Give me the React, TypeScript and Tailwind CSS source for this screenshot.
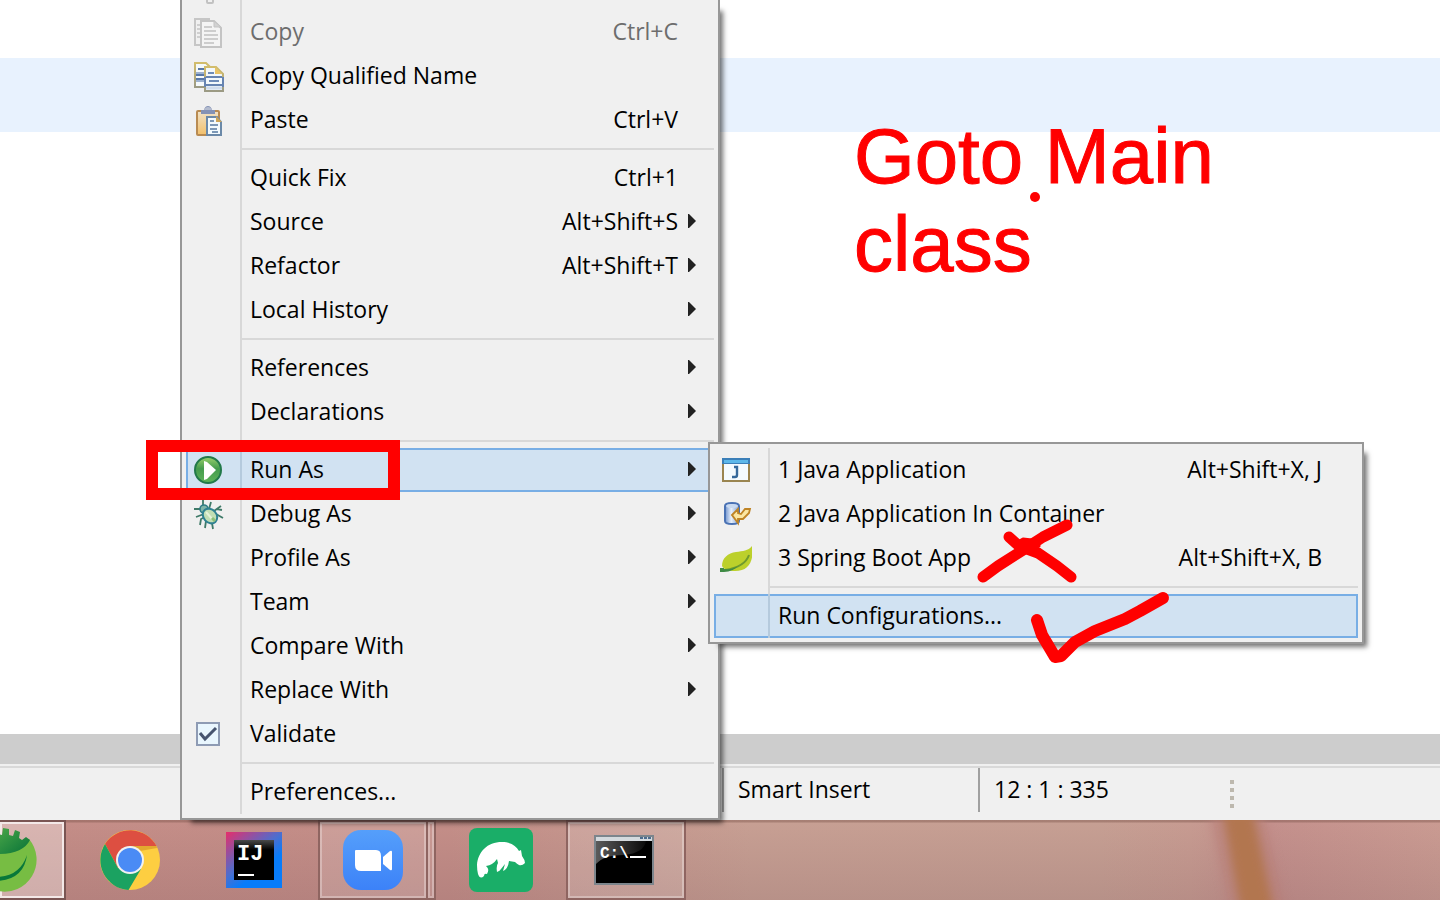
import React, { useState } from "react";

type Item = {
  label: string;
  keys?: string;
  icon?: React.ReactNode;
  arrow?: boolean;
  disabled?: boolean;
  active?: boolean;
};

function CutIcon() {
  return (
    <svg viewBox="0 0 32 10" className="h-2.5 w-8" aria-hidden="true">
      <path d="M15 0v2q0 1 1 1h4q1 0 1-1V0" fill="none" stroke="#c2c2c2" strokeWidth="2" />
    </svg>
  );
}

function CopyIcon() {
  return (
    <svg viewBox="0 0 32 32" className="size-8" aria-hidden="true">
      <path d="M18 3H3v26h5" fill="none" stroke="#c6c6c6" strokeWidth="2" />
      <path d="M5 9h3M5 13h3M5 17h3M5 21h3" stroke="#cfcfcf" strokeWidth="2" />
      <path d="M9 5h13l7 7v19H9z" fill="#f4f4f4" stroke="#c4c4c4" strokeWidth="2" />
      <path d="M22 5v6h7z" fill="#d2d2d2" stroke="#c4c4c4" />
      <path d="M12 11h8M12 15h12M12 19h14M12 23h14M12 27h10" stroke="#cdcdcd" strokeWidth="2" />
    </svg>
  );
}

function CopyNameIcon() {
  return (
    <svg viewBox="0 0 32 32" className="size-8" aria-hidden="true">
      <defs>
        <linearGradient id="nameEdge" x1="0" y1="0" x2="0" y2="1">
          <stop offset="0" stopColor="#d2bd6c" />
          <stop offset="1" stopColor="#9b9a84" />
        </linearGradient>
      </defs>
      <path d="M3 3h11l5 5v19H3z" fill="#f5fafc" stroke="url(#nameEdge)" strokeWidth="2" />
      <path d="M4 13h8M4 21h8" stroke="#9db2d1" strokeWidth="2" />
      <path d="M6 9h6M4 15h8M4 19h8" stroke="#5878a8" strokeWidth="2" />
      <path d="M13 7h11l7 7v17H13z" fill="#f2f8fb" stroke="url(#nameEdge)" strokeWidth="2" />
      <path d="M23 7v7h7z" fill="#e8c365" />
      <path d="M13 17v10M31 17v10" stroke="#6684b2" strokeWidth="2" />
      <path d="M14 17h16M14 25h16" stroke="#6684b2" strokeWidth="2" />
      <path d="M14 28h16" stroke="#cfdced" strokeWidth="3" />
      <path d="M16 13h6M17 21h10" stroke="#6d8bb8" strokeWidth="2" />
    </svg>
  );
}

function PasteIcon() {
  return (
    <svg viewBox="0 0 32 32" className="size-8" aria-hidden="true">
      <defs>
        <linearGradient id="board" x1="0" y1="0" x2="0" y2="1">
          <stop offset="0" stopColor="#f0e2c8" />
          <stop offset="1" stopColor="#f3c06a" />
        </linearGradient>
      </defs>
      <rect x="5" y="7" width="22" height="24" rx="1" fill="url(#board)" stroke="#b98b52" strokeWidth="2" />
      <path d="M9 10V6h3q1-4 4-4t4 4h3v4z" fill="#8492b5" />
      <path d="M12 6q1-3 4-3t4 3z" fill="#b4bccf" />
      <path d="M15 13h10l4 5v13H15z" fill="#f3fafd" stroke="#6b89a8" strokeWidth="2" />
      <path d="M24 12v6h6z" fill="#cda559" />
      <path d="M18 17h4M18 21h8M18 25h7M20 28h6" stroke="#7c98b7" strokeWidth="2" />
    </svg>
  );
}

function RunIcon() {
  return (
    <svg viewBox="0 0 32 32" className="size-8" aria-hidden="true">
      <defs>
        <linearGradient id="run" x1="0" y1="0" x2="0" y2="1">
          <stop offset="0" stopColor="#9ad16d" />
          <stop offset="0.45" stopColor="#449b4d" />
          <stop offset="1" stopColor="#5fb45a" />
        </linearGradient>
      </defs>
      <circle cx="16" cy="16" r="13" fill="url(#run)" stroke="#22794a" strokeWidth="2" />
      <path d="M12 7v19l3-1 9-9-9-8z" fill="#fff" />
    </svg>
  );
}

function BugIcon() {
  return (
    <svg viewBox="0 0 32 32" className="size-8" aria-hidden="true">
      <g fill="none" stroke="#3f7a68" strokeWidth="1.8">
        <path d="M11 2v6M2 11h8M19 4l-2 7M29 8l-7 5M31 20l-7-4M4 19l8-3M8 27l1-6 4-2M13 30l1-7M21 31l-1-6M25 11l5 1" />
      </g>
      <circle cx="12" cy="11" r="4" fill="#7fb5a8" stroke="#2f7c86" strokeWidth="1.6" />
      <ellipse cx="18" cy="18" rx="8" ry="6.5" transform="rotate(48 18 18)" fill="#c1deb4" stroke="#2f8192" strokeWidth="2" />
      <path d="M14 14l7 8" stroke="#e4f2d8" strokeWidth="2" />
      <path d="M20 20l3 3" stroke="#8cbf78" strokeWidth="3" />
    </svg>
  );
}

function JavaAppIcon() {
  return (
    <svg viewBox="0 0 32 32" className="size-8" aria-hidden="true">
      <rect x="3" y="5" width="26" height="22" fill="#f4fbff" stroke="#9a8550" strokeWidth="2" />
      <path d="M2 4h28v6H2z" fill="#3b7fb8" />
      <path d="M4 6h24v3H4z" fill="#5cb8ea" />
      <path d="M14 13h3v8q0 2-2 2h-3" fill="none" stroke="#356a9c" strokeWidth="2.4" />
    </svg>
  );
}

function ContainerIcon() {
  return (
    <svg viewBox="0 0 32 32" className="size-8" aria-hidden="true">
      <defs>
        <linearGradient id="drum" x1="0" y1="0" x2="1" y2="0">
          <stop offset="0" stopColor="#6e92cd" />
          <stop offset="0.45" stopColor="#e8f0fb" />
          <stop offset="1" stopColor="#7d9dd0" />
        </linearGradient>
      </defs>
      <path d="M5 8q0-3 7-3t7 3v15q0 3-7 3t-7-3z" fill="url(#drum)" stroke="#4a72b4" strokeWidth="2" />
      <ellipse cx="12" cy="8" rx="6" ry="2" fill="#c9daf1" />
      <path d="M12 17l6-6v4l3 1 4-5h5l-1 4-6 6h-5v4z" fill="#fbe6a2" stroke="#bf8425" strokeWidth="1.8" />
    </svg>
  );
}

function LeafIcon() {
  return (
    <svg viewBox="0 0 32 32" className="size-8" aria-hidden="true">
      <path d="M32 4c2 13-2 25-17 25-6 0-11-1-13-5 0-8 6-13 14-14 7-1 12-1 16-6z" fill="#bcd02b" />
      <path d="M29 13q-4 12-24 15" fill="none" stroke="#6f9a2d" strokeWidth="2" />
      <path d="M0 26h4v1q10 1 15-4-6 7-15 7H0z" fill="#3f8b45" />
    </svg>
  );
}

function Gutter({ active, children }: { active?: boolean; children?: React.ReactNode }) {
  return (
    <span
      className={
        active
          ? "flex w-14 shrink-0 items-center self-stretch border-r-2 border-[#b5cadd] pl-1.5"
          : "flex w-14 shrink-0 items-center self-stretch border-r-2 border-[#d8d8d8] pl-1.5"
      }
    >
      {children}
    </span>
  );
}

function MenuItem({ label, keys, icon, arrow, disabled, active }: Item) {
  return (
    <button
      type="button"
      role="menuitem"
      aria-haspopup={arrow ? "menu" : undefined}
      disabled={disabled}
      className={
        "flex h-11 w-full items-center text-left whitespace-nowrap " +
        (active ? "bg-[#d1e2f2] inset-ring-2 inset-ring-[#78aee5] " : "") +
        (disabled ? "text-[#6d6d6d]" : "text-black")
      }
    >
      <Gutter active={active}>{icon}</Gutter>
      <span className="grow pb-0.5 pl-2">{label}</span>
      {keys && <span className="pb-0.5">{keys}</span>}
      <span className="flex w-9 shrink-0 pb-0.5 pl-2.5">
        {arrow && (
          <svg viewBox="0 0 8 14" className="h-3.5 w-2" aria-hidden="true">
            <path d="M0 0h1l7 7-7 7H0z" fill="#222" />
          </svg>
        )}
      </span>
    </button>
  );
}

function Separator() {
  return (
    <div role="separator" className="flex h-3.5">
      <Gutter />
      <span className="mt-1.5 h-0.5 grow bg-[#d8d8d8]" />
    </div>
  );
}

function RunAsMenu() {
  return (
    <div
      role="menu"
      aria-label="Run As"
      className="absolute -top-1.5 left-[522px] z-10 w-[656px] border-2 border-[#979797] bg-[#f0f0f0] p-1 shadow-[7px_7px_5px_-4px_rgba(0,0,0,0.55)]"
    >
      <MenuItem label="1 Java Application" keys="Alt+Shift+X, J" icon={<JavaAppIcon />} />
      <MenuItem label="2 Java Application In Container" icon={<ContainerIcon />} />
      <MenuItem label="3 Spring Boot App" keys="Alt+Shift+X, B" icon={<LeafIcon />} />
      <Separator />
      <MenuItem label="Run Configurations..." active />
    </div>
  );
}

function ContextMenu() {
  const [validate, setValidate] = useState(true);
  return (
    <div
      role="menu"
      aria-label="Editor"
      className="absolute top-0 left-[180px] z-10 w-[540px] border-2 border-t-0 border-[#979797] bg-[#f0f0f0] px-1 pb-1 shadow-[7px_7px_5px_-4px_rgba(0,0,0,0.55)]"
    >
      <div className="flex h-2.5">
        <Gutter>
          <CutIcon />
        </Gutter>
      </div>
      <MenuItem label="Copy" keys="Ctrl+C" icon={<CopyIcon />} disabled />
      <MenuItem label="Copy Qualified Name" icon={<CopyNameIcon />} />
      <MenuItem label="Paste" keys="Ctrl+V" icon={<PasteIcon />} />
      <Separator />
      <MenuItem label="Quick Fix" keys="Ctrl+1" />
      <MenuItem label="Source" keys="Alt+Shift+S" arrow />
      <MenuItem label="Refactor" keys="Alt+Shift+T" arrow />
      <MenuItem label="Local History" arrow />
      <Separator />
      <MenuItem label="References" arrow />
      <MenuItem label="Declarations" arrow />
      <Separator />
      <div className="relative">
        <MenuItem label="Run As" icon={<RunIcon />} arrow active />
        <div className="pointer-events-none absolute -top-2 -left-10 z-20 h-[60px] w-[254px] border-12 border-[#ff0000]" />
        <RunAsMenu />
      </div>
      <MenuItem label="Debug As" icon={<BugIcon />} arrow />
      <MenuItem label="Profile As" arrow />
      <MenuItem label="Team" arrow />
      <MenuItem label="Compare With" arrow />
      <MenuItem label="Replace With" arrow />
      <label className="flex h-11 items-center">
        <Gutter>
          <span className="relative ml-1 flex size-6">
            <input
              type="checkbox"
              checked={validate}
              onChange={(e) => setValidate(e.target.checked)}
              className="size-6 appearance-none border-2 border-[#8e9bb4] bg-[#e9f6fe]"
            />
            {validate && (
              <svg viewBox="0 0 24 24" className="pointer-events-none absolute inset-0 size-6" aria-hidden="true">
                <path d="M4 11l5 6L20 6" fill="none" stroke="#46546f" strokeWidth="3" />
              </svg>
            )}
          </span>
        </Gutter>
        <span className="pb-0.5 pl-2">Validate</span>
      </label>
      <Separator />
      <MenuItem label="Preferences..." />
    </div>
  );
}

function StatusBar() {
  return (
    <footer className="flex h-[56px] items-start border-t-2 border-[#f0f0f0] bg-[#f0f0f0]">
      <div className="flex grow border-t-2 border-[#d9d9d9]">
        <div className="w-[722px] shrink-0" />
        <div className="flex h-11 w-64 shrink-0 items-center border-l-2 border-[#a0a0a0] pb-0.5 pl-3.5">
          Smart Insert
        </div>
        <div className="flex h-11 w-[252px] shrink-0 items-center border-l-2 border-[#a0a0a0] pb-0.5 pl-3.5">
          12 : 1 : 335
        </div>
        <div className="flex flex-col gap-1 pt-3">
          <span className="size-1 bg-[#bdb8ae]" />
          <span className="size-1 bg-[#bdb8ae]" />
          <span className="size-1 bg-[#bdb8ae]" />
          <span className="size-1 bg-[#bdb8ae]" />
        </div>
      </div>
    </footer>
  );
}

function SpringLogo() {
  return (
    <svg viewBox="0 0 40 64" className="h-16 w-10" aria-hidden="true">
      <defs>
        <linearGradient id="crown" x1="0" y1="0" x2="1" y2="1">
          <stop offset="0" stopColor="#4aa648" />
          <stop offset="1" stopColor="#077238" />
        </linearGradient>
      </defs>
      <path d="M29 11A32 32 0 0 1-2 63V16z" fill="#77bd43" />
      <path d="M-2 26V6l4 1 1-7 6 1v6l4 1 2-6 5 2-1 6 3 2 4-3 4 3q-7 14-32 14z" fill="url(#crown)" />
      <path d="M-2 49q22-1 29-22-3 24-29 26z" fill="#08783a" />
    </svg>
  );
}

function ChromeLogo() {
  return (
    <svg viewBox="0 0 60 60" className="size-[60px]" aria-hidden="true">
      <circle cx="30" cy="30" r="30" fill="#fdce41" />
      <path d="M30 16h26.500A30 30 0 0 1 57 18L40 21z" fill="#e3a92f" />
      <path d="M5 14A30 30 0 0 1 56.500 16H30L18 38z" fill="#dd4f41" />
      <path d="M5 14L18 38l23 1-12.500 21A30 30 0 0 1 5 14z" fill="#1ba261" />
      <circle cx="30" cy="30" r="14" fill="#f1f1f1" />
      <circle cx="30" cy="30" r="12" fill="#4a8bf5" />
    </svg>
  );
}

function IntelliJLogo() {
  return (
    <svg viewBox="0 0 56 56" className="size-14" aria-hidden="true">
      <defs>
        <linearGradient id="ij" x1="0" y1="0" x2="0.8" y2="1">
          <stop offset="0" stopColor="#e62e6b" />
          <stop offset="0.5" stopColor="#4a6fd0" />
          <stop offset="0.72" stopColor="#087cfa" />
        </linearGradient>
        <linearGradient id="ijTop" x1="0" y1="0" x2="0" y2="1">
          <stop offset="0" stopColor="#4a4a4a" />
          <stop offset="0.25" stopColor="#000" />
        </linearGradient>
      </defs>
      <rect width="56" height="56" fill="url(#ij)" />
      <rect x="8" y="8" width="40" height="40" fill="url(#ijTop)" />
      <text x="11" y="28" fontFamily="'Liberation Mono', monospace" fontWeight="700" fontSize="22" fill="#fff">
        IJ
      </text>
      <rect x="12" y="42" width="16" height="2" fill="#fff" />
    </svg>
  );
}

function ZoomLogo() {
  return (
    <svg viewBox="0 0 60 60" className="size-[60px]" aria-hidden="true">
      <defs>
        <linearGradient id="zm" x1="0" y1="0" x2="0" y2="1">
          <stop offset="0" stopColor="#559ffb" />
          <stop offset="1" stopColor="#3c82f8" />
        </linearGradient>
      </defs>
      <rect width="60" height="60" rx="18" fill="url(#zm)" />
      <path d="M13 20h20q5 0 5 6v15H18q-6 0-6-6V21q0-1 1-1z" fill="#fff" />
      <path d="M40 27l7-6q2-1 2 1v17q0 2-2 1l-7-6z" fill="#fff" />
    </svg>
  );
}

function ManateeLogo() {
  return (
    <svg viewBox="0 0 64 64" className="size-16" aria-hidden="true">
      <rect width="64" height="64" rx="8" fill="#1aae68" />
      <path
        d="M8 37C9 24 18 14 33 14c9 0 14 4 17 9l2-1 1 6q3 4 3 7-3 3-6 2-2-1-4-3l-6-1q-1 8-6 10l2-7-4 5q-1 2-4 3-1-6 1-9l-1-4q-4 6-11 7 4 3 1 8-3-1-3 2-4 4-6-2-1-4-1-9z"
        fill="#fff"
      />
    </svg>
  );
}

function ConsoleLogo() {
  return (
    <svg viewBox="0 0 60 52" className="h-[52px] w-[60px]" aria-hidden="true">
      <defs>
        <linearGradient id="gloss" x1="0" y1="0" x2="1" y2="0">
          <stop offset="0" stopColor="#5b5b5b" />
          <stop offset="1" stopColor="#0a0a0a" />
        </linearGradient>
      </defs>
      <rect x="1" y="2" width="58" height="48" fill="#000" stroke="#7c858c" strokeWidth="2" />
      <path d="M2 3h56v4H2z" fill="#d4dade" />
      <path d="M46 3h3v2h-3zM50 3h3v2h-3zM54 3h3v2h-3z" fill="#4c6c8e" />
      <path d="M2 7h50q-2 12-22 14-20 0-28 9z" fill="url(#gloss)" />
      <text x="6" y="24" fontFamily="'Liberation Mono', monospace" fontWeight="700" fontSize="16" fill="#fff">
        C:\
      </text>
      <rect x="36" y="22" width="16" height="2" fill="#fff" />
    </svg>
  );
}

function Taskbar() {
  return (
    <nav
      aria-label="Taskbar"
      className="relative flex h-20 overflow-hidden bg-[linear-gradient(to_bottom,rgba(120,80,70,0.4)_0,rgba(120,80,70,0.4)_2px,rgba(255,255,255,0)_3px,rgba(90,60,70,0.14)_80px),linear-gradient(to_right,#c48d87_0,#c48e88_450px,#c79f93_750px,#c69f93_1100px,#c79b91_1190px,#c4908c_1270px,#ca9b92_1440px)]"
    >
      <svg
        viewBox="0 0 140 80"
        className="pointer-events-none absolute top-0 left-[1180px] h-20 w-[140px]"
        aria-hidden="true"
      >
        <defs>
          <filter id="soft" x="-40%" y="-20%" width="180%" height="140%">
            <feGaussianBlur stdDeviation="5" />
          </filter>
        </defs>
        <path d="M28-12h54l24 104H50z" fill="#b87f78" opacity="0.6" filter="url(#soft)" />
        <path d="M42-12h30l22 104H61z" fill="#b27650" filter="url(#soft)" />
      </svg>
      <button
        type="button"
        aria-label="Spring Tool Suite"
        className="flex w-[66px] items-center border-2 border-l-0 border-[#7a5553] bg-white/35 inset-ring-2 inset-ring-[#f3e8e7]"
      >
        <SpringLogo />
      </button>
      <button type="button" aria-label="Chrome" className="flex w-32 items-center justify-center">
        <ChromeLogo />
      </button>
      <button type="button" aria-label="IntelliJ IDEA" className="flex w-[120px] items-center justify-center">
        <IntelliJLogo />
      </button>
      <div className="ml-1 flex">
        <button
          type="button"
          aria-label="Zoom"
          className="flex w-[110px] items-center justify-center border-2 border-[#8f6561] bg-white/15 inset-ring-2 inset-ring-white/30"
        >
          <ZoomLogo />
        </button>
        <span className="w-2 border-2 border-l-0 border-[#8f6561] bg-white/10 inset-ring-2 inset-ring-white/30" />
      </div>
      <button type="button" aria-label="Manatee" className="flex w-[130px] items-center justify-center">
        <ManateeLogo />
      </button>
      <button
        type="button"
        aria-label="Command Prompt"
        className="flex w-[120px] items-center justify-center border-2 border-[#8f6561] bg-white/15 pr-1 inset-ring-2 inset-ring-white/30"
      >
        <ConsoleLogo />
      </button>
    </nav>
  );
}

function Notes() {
  return (
    <>
      <p className="absolute top-[112px] left-[854px] z-20 w-[400px] font-['Liberation_Sans',Arial,sans-serif] text-[78px] leading-[88px] text-[#ff0000] [-webkit-text-stroke:1px_#ff0000]">
        Goto Main class
      </p>
      <svg
        viewBox="0 0 240 500"
        className="pointer-events-none absolute top-[180px] left-[960px] z-20 h-[500px] w-[240px]"
        fill="none"
        stroke="#ff0000"
        strokeLinecap="round"
        strokeLinejoin="round"
        aria-hidden="true"
      >
        <circle cx="75" cy="17" r="5" fill="#ff0000" stroke="none" />
        <path d="M23 397l15-11 25-16 20-13 24-12" strokeWidth="11" />
        <path d="M49 357l10 9 19 7 19 13 14 11" strokeWidth="11" />
        <path d="M54 364l9-5 9 1 7 6-10 6z" fill="#ff0000" strokeWidth="3" />
        <path d="M77 440l5 15 13 22 6-1 14-14 20-11 30-12 15-8 23-13" strokeWidth="12" />
      </svg>
    </>
  );
}

export default function App() {
  return (
    <div className="relative flex min-h-screen flex-col overflow-hidden bg-white font-['Open_Sans','Noto_Sans',sans-serif] text-[23px] leading-8 text-black">
      <main className="grow pt-[58px]">
        <div className="h-[74px] bg-[#e8f2fe]" />
      </main>
      <div className="h-[30px] bg-[#cdcdcd]" />
      <StatusBar />
      <Taskbar />
      <ContextMenu />
      <Notes />
    </div>
  );
}
